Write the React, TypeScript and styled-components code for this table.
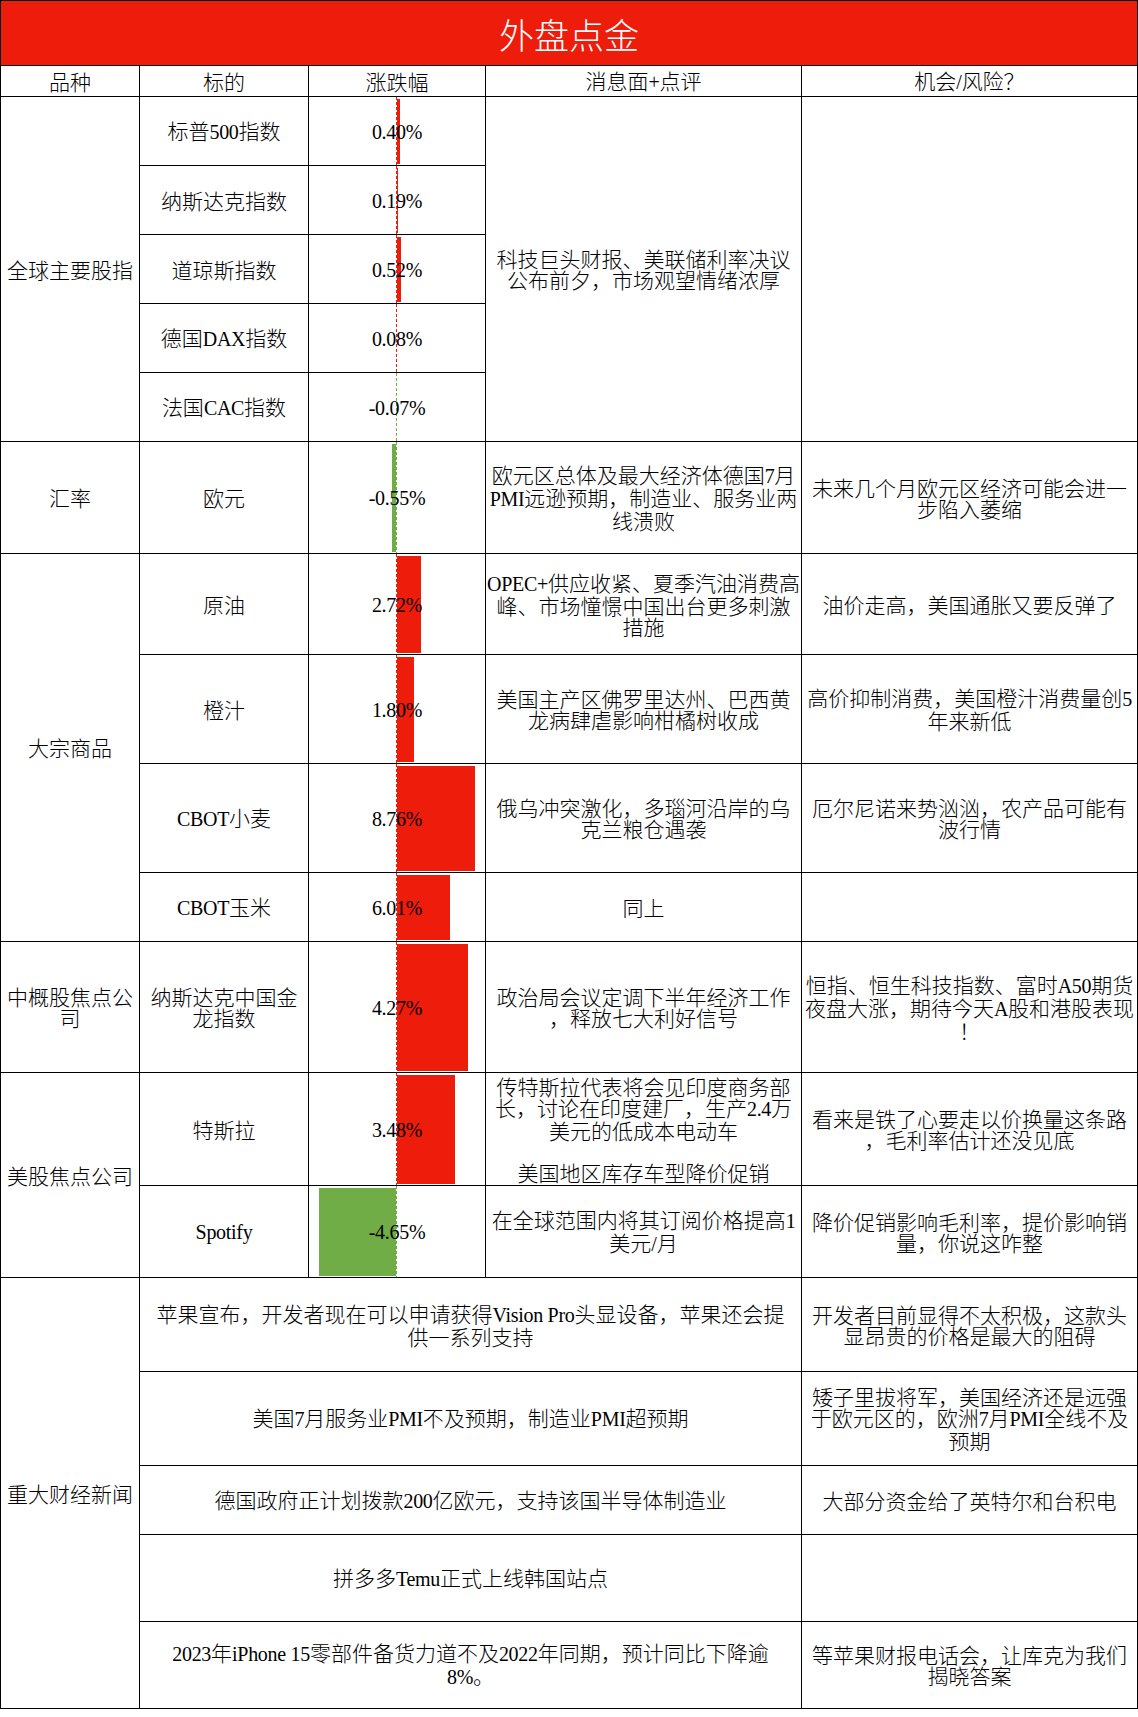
import React from 'react';
import styled, {createGlobalStyle} from 'styled-components';

const RED = '#ee1c0a';
const GREEN = '#70ad47';
const AXIS = 87;

// row heights of the sheet below the title, header first
const ROWS = [31, 69, 69, 69, 69, 69, 112, 101, 109, 109, 69, 131, 113, 92, 94, 94, 69, 87, 87];

type Quote = {
    name: string;
    value: number;
    bar: number;
    note?: string;
    view?: string;
    span?: number;
};

type Group = {
    group: string;
    rows: Quote[];
};

const markets: Group[] = [
    {
        group: '全球主要股指',
        rows: [
            {name: '标普500指数', value: 0.4, bar: 3, note: '科技巨头财报、美联储利率决议\n公布前夕，市场观望情绪浓厚', view: '', span: 5},
            {name: '纳斯达克指数', value: 0.19, bar: 1},
            {name: '道琼斯指数', value: 0.52, bar: 4},
            {name: '德国DAX指数', value: 0.08, bar: 0},
            {name: '法国CAC指数', value: -0.07, bar: 0},
        ],
    },
    {
        group: '汇率',
        rows: [
            {name: '欧元', value: -0.55, bar: 4, note: '欧元区总体及最大经济体德国7月\nPMI远逊预期，制造业、服务业两\n线溃败', view: '未来几个月欧元区经济可能会进一\n步陷入萎缩'},
        ],
    },
    {
        group: '大宗商品',
        rows: [
            {name: '原油', value: 2.72, bar: 24, note: 'OPEC+供应收紧、夏季汽油消费高\n峰、市场憧憬中国出台更多刺激\n措施', view: '油价走高，美国通胀又要反弹了'},
            {name: '橙汁', value: 1.8, bar: 17, note: '美国主产区佛罗里达州、巴西黄\n龙病肆虐影响柑橘树收成', view: '高价抑制消费，美国橙汁消费量创5\n年来新低'},
            {name: 'CBOT小麦', value: 8.76, bar: 78, note: '俄乌冲突激化，多瑙河沿岸的乌\n克兰粮仓遇袭', view: '厄尔尼诺来势汹汹，农产品可能有\n波行情'},
            {name: 'CBOT玉米', value: 6.01, bar: 53, note: '同上', view: ''},
        ],
    },
    {
        group: '中概股焦点公\n司',
        rows: [
            {name: '纳斯达克中国金\n龙指数', value: 4.27, bar: 71, note: '政治局会议定调下半年经济工作\n，释放七大利好信号', view: '恒指、恒生科技指数、富时A50期货\n夜盘大涨，期待今天A股和港股表现\n！'},
        ],
    },
    {
        group: '美股焦点公司',
        rows: [
            {name: '特斯拉', value: 3.48, bar: 58, note: '传特斯拉代表将会见印度商务部\n长，讨论在印度建厂，生产2.4万\n美元的低成本电动车\n\n美国地区库存车型降价促销', view: '看来是铁了心要走以价换量这条路\n，毛利率估计还没见底'},
            {name: 'Spotify', value: -4.65, bar: 77, note: '在全球范围内将其订阅价格提高1\n美元/月', view: '降价促销影响毛利率，提价影响销\n量，你说这咋整'},
        ],
    },
];

const news = [
    {text: '苹果宣布，开发者现在可以申请获得Vision Pro头显设备，苹果还会提\n供一系列支持', view: '开发者目前显得不太积极，这款头\n显昂贵的价格是最大的阻碍'},
    {text: '美国7月服务业PMI不及预期，制造业PMI超预期', view: '矮子里拔将军，美国经济还是远强\n于欧元区的，欧洲7月PMI全线不及\n预期'},
    {text: '德国政府正计划拨款200亿欧元，支持该国半导体制造业', view: '大部分资金给了英特尔和台积电'},
    {text: '拼多多Temu正式上线韩国站点', view: ''},
    {text: '2023年iPhone 15零部件备货力道不及2022年同期，预计同比下降逾\n8%。', view: '等苹果财报电话会，让库克为我们\n揭晓答案'},
];

const GlobalStyle = createGlobalStyle`
    html, body {
        margin: 0;
        padding: 0;
        background: #fff;
    }
    body {
        font-family: "Noto Sans CJK SC", "Noto Sans", sans-serif;
        font-weight: 300;
        color: #000;
    }
`;

const Sheet = styled.div`
    width: 1138px;
`;

const Title = styled.header`
    box-sizing: border-box;
    height: 66px;
    border: 1px solid #000;
    background: ${RED};
    color: #fff;
    font-size: 35px;
    line-height: 1;
    display: flex;
    align-items: center;
    justify-content: center;
`;

const Grid = styled.div`
    display: grid;
    grid-template-columns: 139px 169px 177px 316px 336px;
    grid-template-rows: ${ROWS.map((h) => `${h}px`).join(' ')};
    border-left: 1px solid #000;
`;

const Cell = styled.div<{$rows?: number; $cols?: number}>`
    grid-row: span ${({$rows}) => $rows ?? 1};
    grid-column: span ${({$cols}) => $cols ?? 1};
    box-sizing: border-box;
    border-right: 1px solid #000;
    border-bottom: 1px solid #000;
    display: flex;
    align-items: center;
    justify-content: center;
    padding: 0 1px;
    min-width: 0;
`;

const BarCell = styled(Cell)`
    position: relative;
`;

const Text = styled.div`
    position: relative;
    z-index: 1;
    white-space: pre;
    text-align: center;
    font-size: 21px;
    line-height: 21px;
`;

const Latin = styled.span`
    font-family: "Liberation Serif", "DejaVu Serif", serif;
    font-weight: 400;
    font-size: 20px;
    letter-spacing: -0.3px;
`;

const Bar = styled.div<{$neg: boolean}>`
    position: absolute;
    top: 2px;
    bottom: 1px;
    background: ${({$neg}) => ($neg ? GREEN : RED)};
`;

const Axis = styled.div<{$neg: boolean}>`
    position: absolute;
    top: 0;
    bottom: 0;
    left: ${AXIS}px;
    width: 1px;
    background: repeating-linear-gradient(
        to bottom,
        ${({$neg}) => ($neg ? GREEN : RED)} 0 3px,
        transparent 3px 5px
    );
`;

// ascii runs are set in a thin serif face, as the sheet's latin
function rich(s: string) {
    return s.split(/([\x20-\x7e]+)/).map((part, i) =>
        i % 2 ? <Latin key={i}>{part}</Latin> : part
    );
}

function ChangeCell({value, bar}: {value: number; bar: number}) {
    const neg = value < 0;
    const style = neg ? {left: AXIS - bar, width: bar} : {left: AXIS + 1, width: bar};
    return (
        <BarCell>
            {bar > 0 && <Bar $neg={neg} style={style}/>}
            <Axis $neg={neg}/>
            <Text>{rich(`${value.toFixed(2)}%`)}</Text>
        </BarCell>
    );
}

const headers = ['品种', '标的', '涨跌幅', '消息面+点评', '机会/风险？'];

export default function App() {
    return (
        <Sheet>
            <GlobalStyle/>
            <Title>外盘点金</Title>
            <Grid>
                {headers.map((h) => (
                    <Cell key={h}><Text>{rich(h)}</Text></Cell>
                ))}
                {markets.map((g) => (
                    <React.Fragment key={g.group}>
                        <Cell $rows={g.rows.length}><Text>{g.group}</Text></Cell>
                        {g.rows.map((r) => (
                            <React.Fragment key={r.name}>
                                <Cell><Text>{rich(r.name)}</Text></Cell>
                                <ChangeCell value={r.value} bar={r.bar}/>
                                {r.note !== undefined && (
                                    <>
                                        <Cell $rows={r.span}><Text>{rich(r.note)}</Text></Cell>
                                        <Cell $rows={r.span}><Text>{rich(r.view ?? '')}</Text></Cell>
                                    </>
                                )}
                            </React.Fragment>
                        ))}
                    </React.Fragment>
                ))}
                <Cell $rows={news.length}><Text>重大财经新闻</Text></Cell>
                {news.map((n) => (
                    <React.Fragment key={n.text}>
                        <Cell $cols={3}><Text>{rich(n.text)}</Text></Cell>
                        <Cell><Text>{rich(n.view)}</Text></Cell>
                    </React.Fragment>
                ))}
            </Grid>
        </Sheet>
    );
}
